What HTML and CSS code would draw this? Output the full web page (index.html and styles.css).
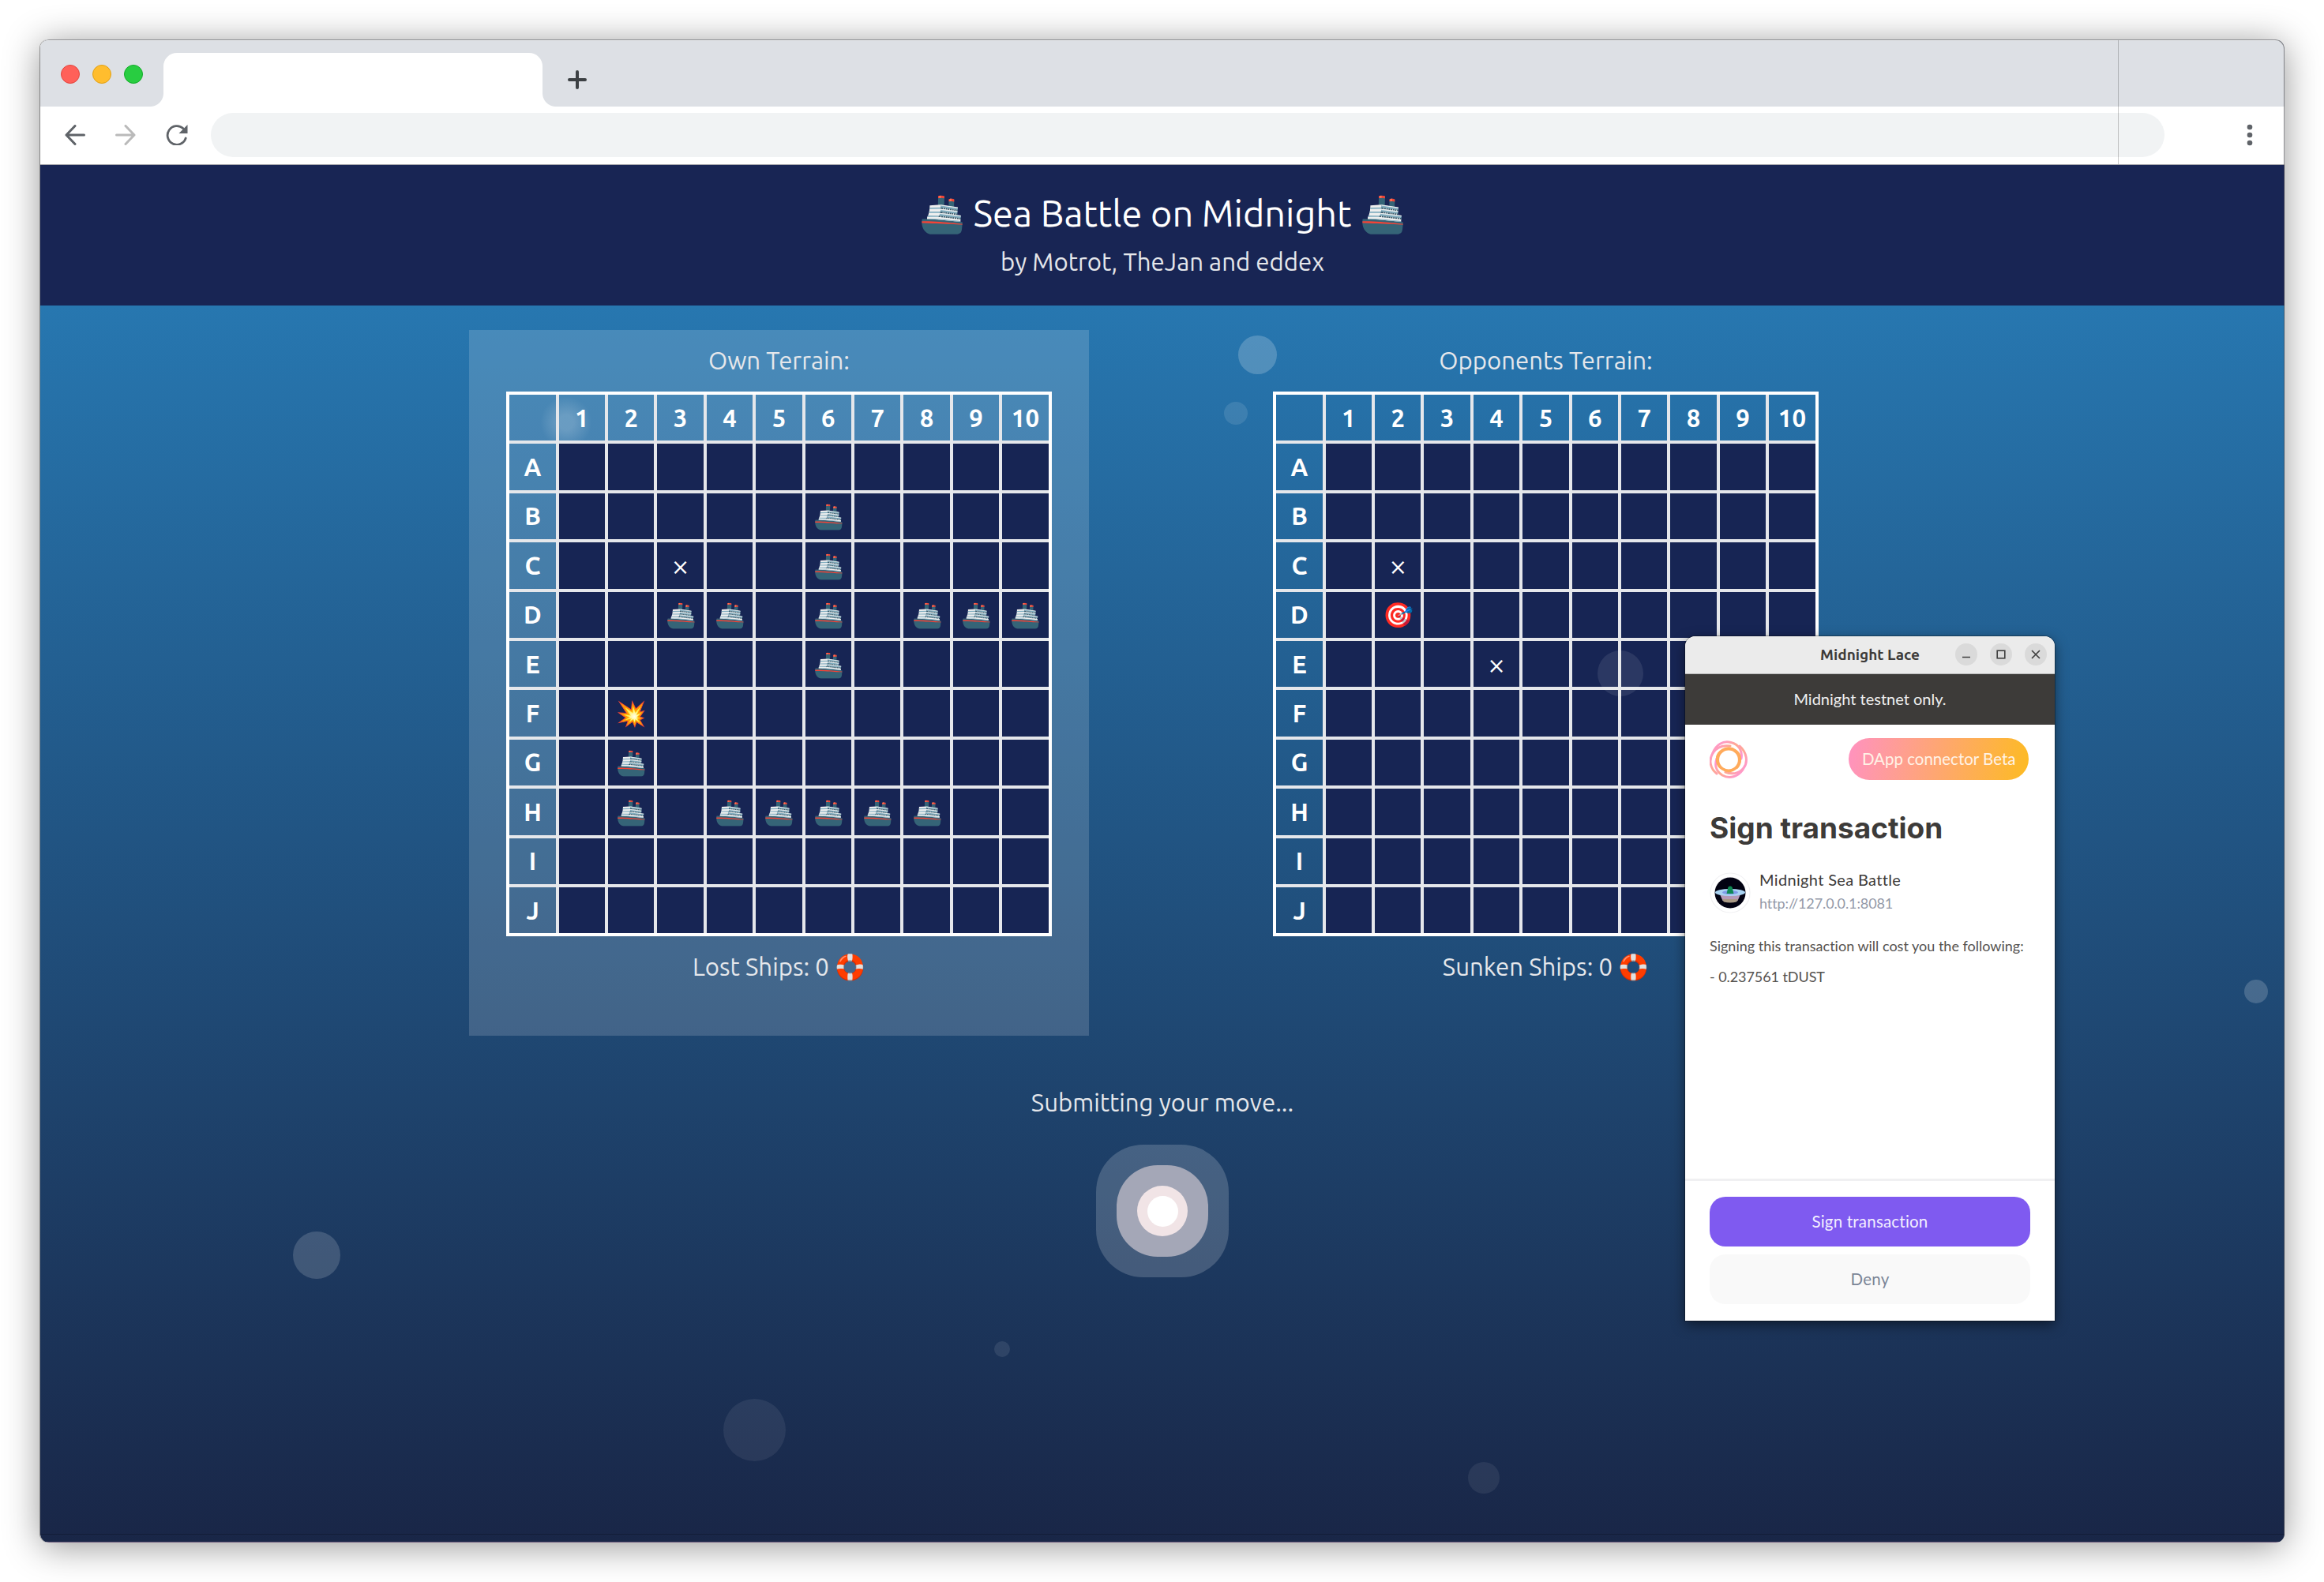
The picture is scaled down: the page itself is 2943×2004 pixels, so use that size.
FILE: index.html
```
<!DOCTYPE html>
<html lang="en">
<head>
<meta charset="utf-8">
<title>Sea Battle on Midnight</title>
<link rel="stylesheet" href="styles.css">
</head>
<body>
<div class="browser">
  <div class="tabs">
    <div class="lights"><i class="light red"></i><i class="light amber"></i><i class="light green"></i></div>
    <div class="tab"></div>
    <svg class="plus" width="24" height="24" viewBox="0 0 24 24"><path d="M12 2v20M2 12h20" stroke="#3c4043" stroke-width="4" stroke-linecap="round"/></svg>
  </div>
  <div class="toolbar">
    <svg class="nav" width="26" height="26" viewBox="0 0 26 26"><path d="M13 1.500L2 13l11 11.500M2 13h22.500" fill="none" stroke="#5f6368" stroke-width="3" stroke-linecap="round" stroke-linejoin="round"/></svg>
    <svg class="nav" width="26" height="26" viewBox="0 0 26 26"><path d="M13 1.500L24 13L13 24.500M24 13H1.500" fill="none" stroke="#bababa" stroke-width="3" stroke-linecap="round" stroke-linejoin="round"/></svg>
    <svg class="nav" width="28" height="26" viewBox="0 0 28 26"><path d="M25.200 17A11.800 11.800 0 1 1 22 4.800" fill="none" stroke="#5f6368" stroke-width="2.800" stroke-linecap="round"/><path d="M27.500 0v11H16.500z" fill="#5f6368"/></svg>
    <div class="address"></div>
    <svg class="menu" width="8" height="28" viewBox="0 0 8 28" fill="#5f6368"><circle cx="4" cy="4" r="3.300"/><circle cx="4" cy="14" r="3.300"/><circle cx="4" cy="24" r="3.300"/></svg>
  </div>
  <header class="masthead">
    <h1>🚢 Sea Battle on Midnight 🚢</h1>
    <p>by Motrot, TheJan and eddex</p>
  </header>
  <main class="sea">
    <div class="boards">
      <section class="board own">
        <div class="label">Own Terrain:</div>
        <div class="grid" id="own"></div>
        <div class="score">Lost Ships: 0 🛟</div>
      </section>
      <section class="board">
        <div class="label">Opponents Terrain:</div>
        <div class="grid" id="opponent"></div>
        <div class="score">Sunken Ships: 0 🛟</div>
      </section>
    </div>
    <div class="status">Submitting your move...</div>
    <div class="pulse"><div class="mid"><div class="inner"><div class="dot"></div></div></div></div>
  </main>
  <div class="seam"></div>
  <i class="bubble b1"></i><i class="bubble b2"></i><i class="bubble b3"></i><i class="bubble b4"></i><i class="bubble b5"></i><i class="bubble b6"></i><i class="bubble b7"></i><i class="bubble b8"></i>
</div>

<div class="dialog">
  <div class="titlebar">
    <span>Midnight Lace</span>
    <div class="controls">
      <svg width="28" height="28" viewBox="0 0 28 28"><circle cx="14" cy="14" r="14" fill="#dadada"/><path d="M9 17.500h10" stroke="#3d3d3d" stroke-width="1.500"/></svg>
      <svg width="28" height="28" viewBox="0 0 28 28"><circle cx="14" cy="14" r="14" fill="#dadada"/><rect x="9.200" y="9.200" width="9.600" height="9.600" fill="none" stroke="#3d3d3d" stroke-width="1.600"/></svg>
      <svg width="28" height="28" viewBox="0 0 28 28"><circle cx="14" cy="14" r="14" fill="#dadada"/><path d="M9 9l10 10M19 9L9 19" stroke="#3d3d3d" stroke-width="1.600"/></svg>
    </div>
  </div>
  <div class="notice">Midnight testnet only.</div>
  <div class="content">
    <div class="brand">
      <svg width="48" height="48" viewBox="0 0 48 48" fill="none" stroke-linecap="round">
        <defs><linearGradient id="lace" x1="0" y1="0" x2="1" y2="1"><stop offset="0" stop-color="#ff92e1"/><stop offset=".5" stop-color="#ffa98f"/><stop offset="1" stop-color="#ff92e1"/></linearGradient></defs>
        <g stroke="url(#lace)" stroke-width="3">
          <path d="M4 16C8 5 17 0 27 2.500C37 5 42 13 40 23"/>
          <path d="M38 7C47 15 49 27 43 35C37 43 27 43 20 40"/>
          <path d="M42 37C36 46 25 49 16 44C8 39 6 31 9 23"/>
          <path d="M9 42C0 35 -1 24 4 16C9 8 18 6 26 7"/>
        </g>
        <g stroke="#ffab5c" stroke-width="3.200">
          <path d="M10 20C14 10 25 7 33 13C40 18 40 28 35 34"/>
          <path d="M38 27C35 37 25 42 16 36C8 31 8 21 12 16"/>
          <circle cx="24" cy="24.500" r="12.800" stroke-width="1.800"/>
        </g>
      </svg>
      <span class="badge">DApp connector Beta</span>
    </div>
    <h2>Sign transaction</h2>
    <div class="site">
      <svg width="52" height="52" viewBox="0 0 52 52"><circle cx="26" cy="26" r="25" fill="#fff" stroke="#f1f1f3" stroke-width="1.200"/><circle cx="26" cy="26" r="19.500" fill="#020212"/><path d="M13 28h26l-3.500 8q-9.500 4-19 0z" fill="#b69ab8"/><path d="M16 34h20l-2 3.500q-8 2-16 0z" fill="#a99a86"/><ellipse cx="26" cy="25.500" rx="19" ry="4.600" fill="#a9d3f2"/><ellipse cx="26" cy="25.500" rx="10" ry="2.600" fill="#7f9be8"/><path d="M26 17.500q3 0 3.200 4l1.300 5.500h-9l1.300-5.500q.2-4 3.200-4z" fill="#0e8a54"/></svg>
      <div class="who"><div class="name">Midnight Sea Battle</div><div class="url">http://127.0.0.1:8081</div></div>
    </div>
    <p class="cost">Signing this transaction will cost you the following:</p>
    <p class="amount">- 0.237561 tDUST</p>
  </div>
  <div class="actions">
    <div class="button primary">Sign transaction</div>
    <div class="button deny">Deny</div>
  </div>
</div>
<script src="boards.js"></script>
</body>
</html>
```
FILE: styles.css
```
* { box-sizing: border-box; }
body {
  margin: 0; padding: 50px 50px 50px 51px; background: #fff; height: 2004px; overflow: hidden; position: relative;
  font-family: Ubuntu, "Noto Sans", sans-serif; font-weight: 400; font-variant-ligatures: none;
}
h1, h2, p { margin: 0; font-weight: inherit; }
i { display: block; }
svg { display: block; flex: none; }

.browser {
  position: relative; height: 1904px; border-radius: 11px; overflow: hidden; display: flex; flex-direction: column;
  background: #fff;
}
.browser::after {
  content: ""; position: absolute; inset: 0; border-radius: 11px; pointer-events: none;
  box-shadow: inset -1px 1px 0 rgba(70,70,75,.6);
}
body::before {
  content: ""; position: absolute; left: 51px; right: 50px; top: 50px; height: 1904px; border-radius: 11px;
  box-shadow: -1px 0 0 rgba(0,0,0,.35), 0 5px 46px rgba(0,0,0,.42);
}
.tabs { height: 85px; flex: none; background: #dde0e5; display: flex; align-items: flex-start; border-top: 2px solid #eceef1; }
.lights { display: flex; gap: 16px; padding: 30px 0 0 26px; width: 156px; }
.light { width: 24px; height: 24px; border-radius: 50%; border: 1px solid; }
.red { background: #ff6059; border-color: #e2463f; }
.amber { background: #ffbd2e; border-color: #e1a116; }
.green { background: #28cd41; border-color: #12ac28; }
.tab { position: relative; width: 480px; height: 68px; margin-top: 15px; background: #fff; border-radius: 17px 17px 0 0; }
.tab::before, .tab::after { content: ""; position: absolute; bottom: 0; width: 17px; height: 17px; }
.tab::before { right: 100%; background: radial-gradient(circle at 0 0, transparent 16.5px, #fff 17.5px); }
.tab::after { left: 100%; background: radial-gradient(circle at 100% 0, transparent 16.5px, #fff 17.5px); }
.plus { margin: 37px 0 0 32px; }
.toolbar { height: 74px; flex: none; background: #fff; display: flex; align-items: center; padding: 0 40px 1px 31px; border-bottom: 1px solid #a5a5ab; }
.nav { margin-right: 38px; }
.nav + .nav + .nav { margin-right: 29px; }
.address { flex: 1; height: 56px; border-radius: 28px; background: #f1f3f4; margin-right: 104px; }
.seam { position: absolute; left: 2631px; top: 1px; width: 1px; height: 157px; background: rgba(0,0,0,.22); }

.masthead { height: 178px; flex: none; background: #182554; color: #fff; text-align: center; padding-top: 31px; }
.masthead h1 { font-size: 46.8px; line-height: 60px; }
.masthead p { font-size: 31.2px; line-height: 63px; color: #e5e7eb; }
.sea {
  flex: 1; padding-top: 31px; background: linear-gradient(#2777b0, #192647); color: #e5e7eb;
  display: flex; flex-direction: column; align-items: center; font-size: 31.2px; border-bottom: 1px solid #71607f;
}
.sea::after { content: ""; align-self: stretch; height: 1px; margin: auto 0 9px; background: rgba(0,0,0,.22); }
.boards { display: flex; gap: 186px; }
.board { width: 785px; height: 894px; display: flex; flex-direction: column; align-items: center; }
.own { position: relative; background: rgba(255,255,255,.155); }
.own::before { content: ""; position: absolute; left: 90px; top: 84px; width: 66px; height: 66px; border-radius: 50%; background: radial-gradient(rgba(255,255,255,.19) 20%, transparent 70%); }
.own .grid { position: relative; }
.label { line-height: 77.500px; height: 78px; }
.score { line-height: 77px; white-space: pre; }
.grid {
  width: 690.4px; height: 690.4px; border: 4px solid #fff; color: #fff; flex: none;
  display: grid; grid-template: repeat(10, 62.4px) 58.4px / repeat(10, 62.4px) 58.4px;
}
.cell { border: 0 solid #e5e7eb; border-width: 0 4px 4px 0; padding: 2px 0 0 1px; display: flex; align-items: center; justify-content: center; background: #172554; min-width: 0; white-space: nowrap; }
.cell.miss { font-size: 41px; font-weight: 300; line-height: 40px; padding: 0 0 1px; }
.cell.head { background: none; font-weight: 700; padding: 0; }
.cell.last-col { border-right: 0; }
.cell.last-row { border-bottom: 0; }
.status { margin-top: 45px; line-height: 80px; }
.pulse, .mid, .inner { display: flex; align-items: center; justify-content: center; flex: none; }
.pulse { margin-top: 13px; width: 168px; height: 168px; border-radius: 60px; background: rgba(255,255,255,.18); }
.mid { width: 116px; height: 116px; border-radius: 52px; background: #a4a7b7; }
.inner { width: 64px; height: 64px; border-radius: 50%; background: #f1e4e6; }
.dot { width: 39px; height: 39px; border-radius: 50%; background: #fff; }

.bubble { position: absolute; border-radius: 50%; }
.b1 { left: 1517px; top: 375px; width: 49px; height: 49px; background: rgba(255,255,255,.2); }
.b2 { left: 1499px; top: 459px; width: 30px; height: 29px; background: rgba(255,255,255,.11); }
.b3 { left: 1972px; top: 774px; width: 58px; height: 58px; background: rgba(255,255,255,.09); }
.b4 { left: 2791px; top: 1191px; width: 30px; height: 30px; background: rgba(255,255,255,.18); }
.b5 { left: 320px; top: 1510px; width: 60px; height: 60px; background: rgba(255,255,255,.16); }
.b6 { left: 1208px; top: 1649px; width: 20px; height: 20px; background: rgba(255,255,255,.09); }
.b7 { left: 865px; top: 1722px; width: 79px; height: 79px; background: rgba(255,255,255,.07); }
.b8 { left: 1808px; top: 1802px; width: 40px; height: 40px; background: rgba(255,255,255,.07); }

.dialog {
  position: absolute; left: 2134px; top: 806px; width: 468px; height: 867px; background: #fff; border-radius: 13px 13px 0 0;
  box-shadow: 0 0 0 1px rgba(0,0,0,.3), 0 5px 16px rgba(0,0,0,.5);
  font-family: Lato, "Open Sans", sans-serif; color: #3d3b39; display: flex; flex-direction: column;
}
.titlebar { position: relative; height: 48px; background: #ebebeb; border-radius: 13px 13px 0 0; border-bottom: 1px solid #b9b9b8; text-align: center; font: 700 19px/47px Ubuntu, "Noto Sans", sans-serif; flex: none; }
.controls { position: absolute; right: 10px; top: 9px; display: flex; gap: 16px; }
.notice { height: 64px; flex: none; background: #3d3b39; color: #efefef; text-align: center; font-size: 20px; line-height: 63px; }
.content { flex: 1; padding: 17px 33px 0 31px; }
.brand { display: flex; justify-content: space-between; align-items: center; height: 53px; }
.badge { height: 53px; border-radius: 27px; background: linear-gradient(100deg, #ff92c0, #fdbb22); color: #fff2e6; font-size: 20.500px; line-height: 52px; padding: 0 16.500px; }
h2 { font-family: Inter, sans-serif; font-size: 37px; font-weight: 700; line-height: 49px; margin-top: 36px; white-space: nowrap; }
.site { display: flex; align-items: center; gap: 11px; margin-top: 32px; height: 52px; }
.who { margin-top: -4px; }
.name { font-size: 20px; line-height: 30px; letter-spacing: .34px; }
.url { font-size: 18px; line-height: 31px; letter-spacing: -.1px; color: #9399a8; }
.cost { font-size: 18px; line-height: 40px; margin-top: 21px; white-space: nowrap; color: #55524f; }
.amount { font-size: 18px; line-height: 38px; letter-spacing: -.07px; color: #55524f; }
.actions { height: 180px; flex: none; border-top: 3px solid #f0f0f2; padding: 20px 31px 0; display: flex; flex-direction: column; gap: 10px; }
.button { height: 63px; border-radius: 20px; text-align: center; line-height: 62px; font-size: 20.500px; letter-spacing: .2px; }
.primary { background: #7f5af0; color: #f3efff; }
.deny { background: #f9f9f9; color: #7b8596; }
```
FILE: boards.js
```
const rows = 'ABCDEFGHIJ';
const boards = {
  own: { B6: '🚢', C3: '×', C6: '🚢', D3: '🚢', D4: '🚢', D6: '🚢', D8: '🚢', D9: '🚢', D10: '🚢', E6: '🚢', F2: '💥', G2: '🚢', H2: '🚢', H4: '🚢', H5: '🚢', H6: '🚢', H7: '🚢', H8: '🚢' },
  opponent: { C2: '×', D2: '🎯', E4: '×' },
};

for (const [id, marks] of Object.entries(boards)) {
  const grid = document.getElementById(id);
  for (let r = 0; r <= 10; r++) {
    for (let c = 0; c <= 10; c++) {
      const mark = marks[rows[r - 1] + c] || '';
      const cell = document.createElement('div');
      cell.className = 'cell';
      if (!r || !c) cell.classList.add('head');
      if (mark === '×') cell.classList.add('miss');
      if (c === 10) cell.classList.add('last-col');
      if (r === 10) cell.classList.add('last-row');
      if (!r) cell.textContent = c || '';
      else if (!c) cell.textContent = rows[r - 1];
      else cell.textContent = mark;
      grid.append(cell);
    }
  }
}
```
